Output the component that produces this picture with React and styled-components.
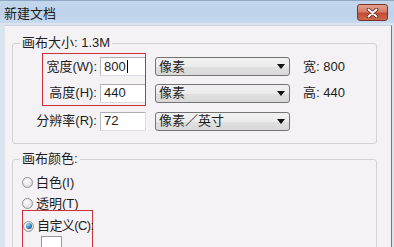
import React from "react";
import styled, { createGlobalStyle } from "styled-components";

const GlobalStyle = createGlobalStyle`
  html, body {
    margin: 0;
    padding: 0;
    background: #ffffff;
  }
  body {
    font-family: "Liberation Sans", "Noto Sans CJK SC", sans-serif;
    font-size: 13px;
    color: #1e1e1e;
  }
`;

const Window = styled.div`
  width: 394px;
  height: 247px;
  overflow: hidden;
  display: flex;
  flex-direction: column;
  background: #d9e4ef;
`;

const TitleBar = styled.div`
  flex: none;
  height: 23px;
  box-sizing: border-box;
  display: flex;
  align-items: flex-start;
  justify-content: space-between;
  padding: 0 6px 0 4px;
  background: linear-gradient(#c3d6ec, #bdd3ea 60%, #c7daee);
  border-top: 1px solid #8ea7c2;
`;

const Title = styled.span`
  padding-top: 5px;
  line-height: 16px;
  color: #1a1a1a;
`;

const CloseButton = styled.div`
  margin-top: 3px;
  width: 31px;
  height: 17px;
  box-sizing: border-box;
  border: 1px solid #7a3427;
  border-radius: 3px;
  background: linear-gradient(#e3a291, #d57d66 45%, #c24d35 55%, #cc6a50);
  display: flex;
  align-items: center;
  justify-content: center;
`;

const Frame = styled.div`
  flex: 1;
  display: flex;
  padding: 2px 2px 0 5px;
  min-height: 0;
`;

const Panel = styled.div`
  flex: 1;
  overflow: hidden;
  background: #f5f2f5;
  border-top: 1px solid #d2d4da;
  border-right: 1px solid #4f859f;
`;

const Group = styled.fieldset`
  margin: ${(p) => p.$top}px 14px 0 7px;
  padding: ${(p) => p.$padTop}px 0 ${(p) => p.$padBottom}px 9px;
  border: 1px solid #d3d0d7;
  border-radius: 3px;
  min-inline-size: 0;
`;

const Legend = styled.legend`
  padding: 0 2px;
  margin-left: -2px;
  line-height: 16px;
  color: #1e1e1e;
`;

const FieldGrid = styled.div`
  display: grid;
  grid-template-columns: 65px 46px 144px auto;
  grid-template-rows: 27px 26px 30px;
  align-items: center;
  margin-left: 13px;
`;

const Highlight = styled.div`
  grid-row: 1 / 3;
  grid-column: 1 / 3;
  align-self: stretch;
  margin-left: 7px;
  border: 1px solid #c8323c;
  pointer-events: none;
`;

const FieldLabel = styled.span`
  grid-column: 1;
  grid-row: ${(p) => p.$row};
  text-align: right;
  padding-right: 3px;
  line-height: 16px;
  white-space: nowrap;
`;

const TextBox = styled.div`
  grid-column: 2;
  grid-row: ${(p) => p.$row};
  height: 19px;
  box-sizing: border-box;
  background: #ffffff;
  border: 1px solid #dadde3;
  border-top-color: #abadb3;
  border-left-color: #b9bbc1;
  padding-left: 3px;
  display: flex;
  align-items: center;
  line-height: 16px;
`;

const Caret = styled.span`
  width: 1px;
  height: 13px;
  margin-left: 1px;
  background: #000000;
`;

const Dropdown = styled.div`
  grid-column: 3;
  grid-row: ${(p) => p.$row};
  justify-self: end;
  width: 135px;
  height: 19px;
  box-sizing: border-box;
  border: 1px solid #747474;
  border-radius: 3px;
  background: linear-gradient(#f2f2f2, #ebebeb 50%, #e0e0e0 51%, #d9d9d9);
  display: flex;
  align-items: center;
  justify-content: space-between;
  padding: 0 4px 0 3px;
  line-height: 16px;
`;

const Info = styled.span`
  grid-column: 4;
  grid-row: ${(p) => p.$row};
  padding-left: 13px;
  line-height: 16px;
  white-space: nowrap;
`;

const RadioList = styled.div`
  display: flex;
  flex-direction: column;
`;

const RadioRow = styled.div`
  height: ${(p) => p.$h}px;
  display: flex;
  align-items: center;
  gap: 3px;
  line-height: 16px;
  white-space: nowrap;
  letter-spacing: ${(p) => (p.$tight ? "-0.6px" : "0")};
`;

const RadioDot = styled.span`
  flex: none;
  width: 11px;
  height: 11px;
  box-sizing: border-box;
  border-radius: 50%;
  border: 1px solid #949494;
  background: radial-gradient(circle at 40% 35%, #ffffff 0%, #ececec 45%, #cdcdcd 100%);
  display: flex;
  align-items: center;
  justify-content: center;

  &::after {
    content: "";
    display: ${(p) => (p.$checked ? "block" : "none")};
    width: 6px;
    height: 6px;
    border-radius: 50%;
    background: radial-gradient(circle at 35% 30%, #9bd8f4, #2a74b3 60%, #123f6c);
  }
`;

const ColorBlock = styled.div`
  width: 71px;
  height: 44px;
  box-sizing: border-box;
  margin-top: -4px;
  padding-top: 6px;
  border: 1px solid #c8323c;
`;

const Swatch = styled.div`
  width: 21px;
  height: 20px;
  margin: 1px 0 0 18px;
  box-sizing: border-box;
  border: 1px solid #9a9a9a;
  background: #ffffff;
`;

function DropArrow() {
  return (
    <svg width="8" height="5" viewBox="0 0 8 5">
      <polygon points="0,0 8,0 4,5" fill="#111" />
    </svg>
  );
}

function CloseGlyph() {
  return (
    <svg width="13" height="10" viewBox="0 0 13 10">
      <path d="M2.5 1.5 L10.5 8.5 M10.5 1.5 L2.5 8.5" stroke="#5e2217" strokeWidth="3.6" strokeLinecap="round" />
      <path d="M2.5 1.5 L10.5 8.5 M10.5 1.5 L2.5 8.5" stroke="#ffffff" strokeWidth="2" strokeLinecap="round" />
    </svg>
  );
}

export default function App() {
  return (
    <>
      <GlobalStyle />
      <Window>
        <TitleBar>
          <Title>新建文档</Title>
          <CloseButton>
            <CloseGlyph />
          </CloseButton>
        </TitleBar>
        <Frame>
          <Panel>
            <Group $top={9} $padTop={2} $padBottom={7}>
              <Legend>画布大小: 1.3M</Legend>
              <FieldGrid>
                <FieldLabel $row={1}>宽度(W):</FieldLabel>
                <TextBox $row={1}>
                  800<Caret />
                </TextBox>
                <Dropdown $row={1}>
                  <span>像素</span>
                  <DropArrow />
                </Dropdown>
                <Info $row={1}>宽: 800</Info>

                <FieldLabel $row={2}>高度(H):</FieldLabel>
                <TextBox $row={2}>440</TextBox>
                <Dropdown $row={2}>
                  <span>像素</span>
                  <DropArrow />
                </Dropdown>
                <Info $row={2}>高: 440</Info>

                <FieldLabel $row={3}>分辨率(R):</FieldLabel>
                <TextBox $row={3}>72</TextBox>
                <Dropdown $row={3}>
                  <span>像素／英寸</span>
                  <DropArrow />
                </Dropdown>

                <Highlight />
              </FieldGrid>
            </Group>

            <Group $top={7} $padTop={5} $padBottom={0}>
              <Legend>画布颜色:</Legend>
              <RadioList>
                <RadioRow $h={21}>
                  <RadioDot />
                  <span>白色(I)</span>
                </RadioRow>
                <RadioRow $h={21}>
                  <RadioDot />
                  <span>透明(T)</span>
                </RadioRow>
                <ColorBlock>
                  <RadioRow $h={18} $tight>
                    <RadioDot $checked />
                    <span>自定义(C):</span>
                  </RadioRow>
                  <Swatch />
                </ColorBlock>
              </RadioList>
            </Group>
          </Panel>
        </Frame>
      </Window>
    </>
  );
}
